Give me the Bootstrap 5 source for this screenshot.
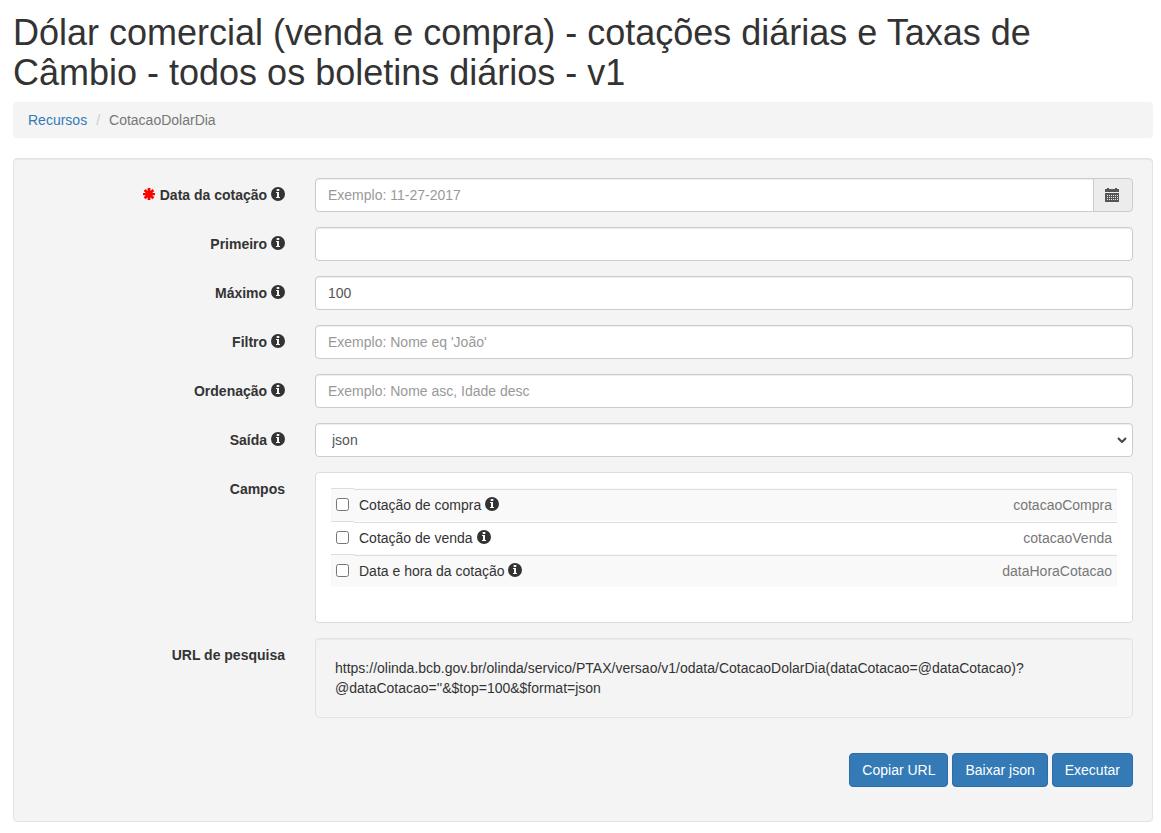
<!DOCTYPE html>
<html lang="pt-BR">
<head>
<meta charset="utf-8">
<meta name="viewport" content="width=device-width, initial-scale=1">
<title>Dólar comercial - cotações diárias</title>
<link rel="stylesheet" href="https://cdn.jsdelivr.net/npm/bootstrap@5.3.0/dist/css/bootstrap.min.css">
<style>
body { font: 14px/20px "Liberation Sans", Arial, sans-serif; color: #333; background: #fff; }
.page { padding: 13px 8px 11px 13px; }
h1 { font-size: 36px; font-weight: 400; line-height: 40px; margin-bottom: 9px; }
a { color: #337ab7; text-decoration: none; }
.breadcrumb { --bs-breadcrumb-divider-color: #ccc; --bs-breadcrumb-item-active-color: #777; --bs-breadcrumb-item-padding-x: 9px; background: #f4f4f4; border-radius: 4px; padding: 8px 15px; margin-bottom: 20px; }
.well { background: #f4f4f4; border: 1px solid #e3e3e3; border-radius: 4px; padding: 19px; box-shadow: inset 0 1px 1px rgba(0,0,0,.05); }
.form-row { --bs-gutter-x: 30px; margin-bottom: 15px; }
.field-label { width: 282px; font-weight: 700; padding-top: 7px; text-align: right; }
.form-control, .form-select { font-size: 14px; line-height: 20px; height: 34px; padding: 6px 12px; color: #555; background-color: #fff; border: 1px solid #ccc; border-radius: 4px; box-shadow: inset 0 1px 1px rgba(0,0,0,.075); }
.form-select { padding-left: 16px; background: #fff url("data:image/svg+xml,%3Csvg xmlns='http://www.w3.org/2000/svg' viewBox='0 0 10 6'%3E%3Cpath d='M1 1l4 4 4-4' fill='none' stroke='%23444' stroke-width='2'/%3E%3C/svg%3E") right 5px center / 10px 6px no-repeat; }
.form-control::placeholder { color: #999; }
.date-btn { display: flex; align-items: center; background: #ececec; color: #555; border: 1px solid #ccc; border-radius: 4px; padding: 0 13px 0 11px; }
.ico { width: 14px; height: 14px; fill: currentColor; vertical-align: -1px; }
.required { color: red; }
.fields { background: #fff; border: 1px solid #ddd; border-radius: 4px; padding: 15px; }
.fields table { width: 100%; margin-bottom: 20px; border-collapse: separate; border-spacing: 0; }
.fields td { padding: 6px 5px; height: 33px; line-height: 20px; background: linear-gradient(#ddd, #ddd) 0 1px / 100% 1px no-repeat; }
.fields td.pick { width: 23px; background: none; border-top: 1px solid #ddd; padding: 5px 5px 7px; }
.fields tr:nth-child(odd) td { background-color: #f9f9f9; }
.fields td.code { color: #777; text-align: right; }
.fields input { display: block; width: 13px; height: 13px; margin: 0; }
.actions { gap: 4px; padding: 20px 0 15px; }
.btn-primary { --bs-btn-bg: #337ab7; --bs-btn-border-color: #2e6da4; --bs-btn-hover-bg: #286090; font-size: 14px; line-height: 20px; padding: 6px 12px; border-radius: 4px; }
</style>
</head>
<body>
<svg class="d-none" aria-hidden="true">
  <symbol id="info" viewBox="0 0 14 14"><path fill-rule="evenodd" d="M7 0a7 7 0 1 1 0 14A7 7 0 0 1 7 0ZM5.700 2v2h2.600V2ZM5 5v1h1v4H5v1h4v-1H8V5Z"/></symbol>
  <symbol id="asterisk" viewBox="0 0 14 14"><path d="M5.600 1h2.800v3l2-2 1.900 1.900-2 2H13v2.400h-2.700l2 2-1.900 1.900-2-2V13H5.600v-2.800l-2 2-1.900-1.900 2-2H1V5.900h2.700l-2-2L3.600 2l2 2Z"/></symbol>
  <symbol id="calendar" viewBox="0 0 14 14"><path fill-rule="evenodd" d="M0 1h2V0h2v1h6V0h2v1h2v3H0ZM0 5h14v9H0ZM2 7v1h1V7ZM4 7v1h1V7ZM6 7v1h1V7ZM8 7v1h1V7ZM10 7v1h1V7ZM12 7v1h1V7ZM2 9v1h1V9ZM4 9v1h1V9ZM6 9v1h1V9ZM8 9v1h1V9ZM10 9v1h1V9ZM12 9v1h1V9ZM2 11v1h1v-1ZM4 11v1h1v-1ZM6 11v1h1v-1ZM8 11v1h1v-1ZM10 11v1h1v-1ZM12 11v1h1v-1Z"/></symbol>
</svg>
<main class="page">
  <h1>Dólar comercial (venda e compra) - cotações diárias e Taxas de Câmbio - todos os boletins diários - v1</h1>
  <nav aria-label="breadcrumb">
    <ol class="breadcrumb">
      <li class="breadcrumb-item"><a href="#">Recursos</a></li>
      <li class="breadcrumb-item active" aria-current="page">CotacaoDolarDia</li>
    </ol>
  </nav>
  <form class="well">
    <div class="row form-row">
      <label class="col-auto field-label" for="data"><svg class="ico required"><use href="#asterisk"/></svg> Data da cotação <svg class="ico"><use href="#info"/></svg></label>
      <div class="col"><div class="input-group">
        <input class="form-control" id="data" type="text" placeholder="Exemplo: 11-27-2017">
        <button class="date-btn" type="button" aria-label="Calendário"><svg class="ico"><use href="#calendar"/></svg></button>
      </div></div>
    </div>
    <div class="row form-row">
      <label class="col-auto field-label" for="primeiro">Primeiro <svg class="ico"><use href="#info"/></svg></label>
      <div class="col"><input class="form-control" id="primeiro" type="text"></div>
    </div>
    <div class="row form-row">
      <label class="col-auto field-label" for="maximo">Máximo <svg class="ico"><use href="#info"/></svg></label>
      <div class="col"><input class="form-control" id="maximo" type="text" value="100"></div>
    </div>
    <div class="row form-row">
      <label class="col-auto field-label" for="filtro">Filtro <svg class="ico"><use href="#info"/></svg></label>
      <div class="col"><input class="form-control" id="filtro" type="text" placeholder="Exemplo: Nome eq 'João'"></div>
    </div>
    <div class="row form-row">
      <label class="col-auto field-label" for="ordem">Ordenação <svg class="ico"><use href="#info"/></svg></label>
      <div class="col"><input class="form-control" id="ordem" type="text" placeholder="Exemplo: Nome asc, Idade desc"></div>
    </div>
    <div class="row form-row">
      <label class="col-auto field-label" for="saida">Saída <svg class="ico"><use href="#info"/></svg></label>
      <div class="col"><select class="form-select" id="saida"><option>json</option><option>xml</option><option>text/csv</option><option>text/html</option></select></div>
    </div>
    <div class="row form-row">
      <div class="col-auto field-label">Campos</div>
      <div class="col"><div class="fields">
        <table>
          <tbody>
            <tr><td class="pick"><input type="checkbox" id="c1"></td><td><label for="c1">Cotação de compra <svg class="ico"><use href="#info"/></svg></label></td><td class="code">cotacaoCompra</td></tr>
            <tr><td class="pick"><input type="checkbox" id="c2"></td><td><label for="c2">Cotação de venda <svg class="ico"><use href="#info"/></svg></label></td><td class="code">cotacaoVenda</td></tr>
            <tr><td class="pick"><input type="checkbox" id="c3"></td><td><label for="c3">Data e hora da cotação <svg class="ico"><use href="#info"/></svg></label></td><td class="code">dataHoraCotacao</td></tr>
          </tbody>
        </table>
      </div></div>
    </div>
    <div class="row form-row">
      <div class="col-auto field-label">URL de pesquisa</div>
      <div class="col"><div class="well">https://olinda.bcb.gov.br/olinda/servico/PTAX/versao/v1/odata/CotacaoDolarDia(dataCotacao=@dataCotacao)?<wbr>@dataCotacao=''&amp;$top=100&amp;$format=json</div></div>
    </div>
    <div class="actions d-flex justify-content-end">
      <button class="btn btn-primary" type="button">Copiar URL</button>
      <button class="btn btn-primary" type="button">Baixar json</button>
      <button class="btn btn-primary" type="submit">Executar</button>
    </div>
  </form>
</main>
<script src="https://cdn.jsdelivr.net/npm/bootstrap@5.3.0/dist/js/bootstrap.bundle.min.js"></script>
</body>
</html>
